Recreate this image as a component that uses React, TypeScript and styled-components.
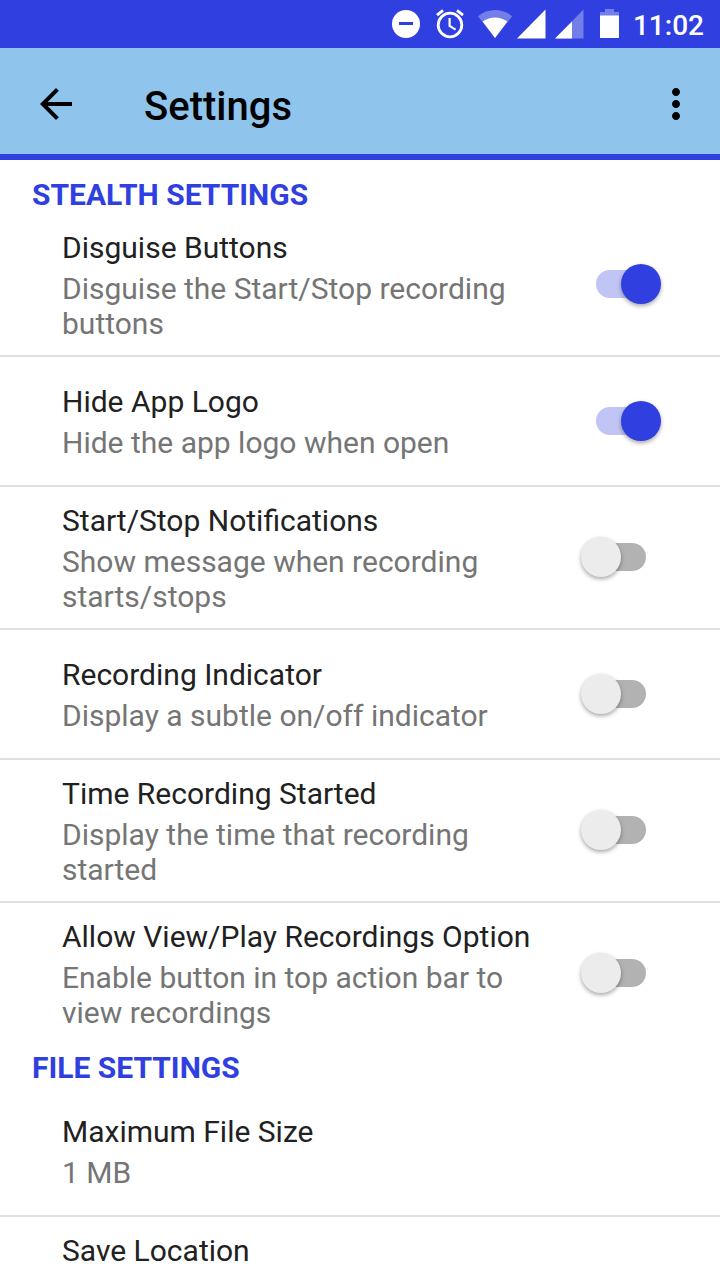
import { useState } from "react";
import styled, { createGlobalStyle } from "styled-components";

const GlobalStyle = createGlobalStyle`
  *, *::before, *::after { box-sizing: border-box; }
  html, body, #root { height: 100%; }
  body {
    margin: 0;
    background: #ffffff;
    color: #212121;
    font-family: Roboto, "Liberation Sans", sans-serif;
    font-size: 30px;
    line-height: 35px;
    overflow: hidden;
  }
`;

const Screen = styled.div`
  display: flex;
  flex-direction: column;
  height: 100%;
`;

const StatusBar = styled.div`
  display: flex;
  flex: none;
  align-items: center;
  justify-content: flex-end;
  height: 48px;
  padding-right: 16px;
  background: #303fdf;
  color: #ffffff;
`;

const StatusIcons = styled.svg`
  display: block;
  width: 242px;
  height: 48px;
`;

const Clock = styled.time`
  font-size: 28px;
  font-weight: 500;
  padding-top: 2px;
`;

const AppBar = styled.header`
  display: flex;
  flex: none;
  align-items: center;
  height: 112px;
  padding: 6px 20px 0 32px;
  background: #8fc5ec;
  border-bottom: 6px solid #303fdf;
`;

const IconButton = styled.button`
  display: flex;
  padding: 0;
  border: 0;
  background: none;
  color: #000000;
  cursor: pointer;

  svg {
    width: 48px;
    height: 48px;
    fill: currentColor;
  }
`;

const PageTitle = styled.h1`
  flex: 1;
  margin: 0;
  padding: 6px 0 0 64px;
  color: #000000;
  font-size: 40px;
  font-weight: 500;
  line-height: 48px;
`;

const SettingsList = styled.main`
  flex: 1;
  min-height: 0;
  padding-top: 11px;
  overflow: hidden;
`;

const SectionTitle = styled.h2`
  margin: 0;
  padding: 6px 32px 2px;
  color: #303fdf;
  font-size: 30px;
  font-weight: 700;
  line-height: 35px;
  text-transform: uppercase;
`;

const Row = styled.div`
  display: flex;
  align-items: center;
  min-height: 128px;
  padding: 14px 59px 14px 62px;

  & + & {
    min-height: 130px;
    border-top: 2px solid #e0e0e0;
  }
`;

const RowText = styled.div`
  flex: 1;
  margin-right: 32px;
  padding-top: 2px;
`;

const RowTitle = styled.label`
  display: block;
  margin-bottom: 6px;
`;

const Summary = styled.p`
  margin: 0;
  color: #757575;
`;

const Switch = styled.input`
  position: relative;
  flex: none;
  appearance: none;
  width: 80px;
  height: 40px;
  margin: 0 0 1px;
  cursor: pointer;

  &::before {
    content: "";
    position: absolute;
    inset: 6px 15px;
    border-radius: 14px;
    background: #b2b2b2;
  }

  &::after {
    content: "";
    position: absolute;
    top: 0;
    left: 0;
    width: 40px;
    height: 40px;
    border-radius: 50%;
    background: #ececec;
    box-shadow: 0 2px 4px rgba(0, 0, 0, 0.35);
  }

  &:checked::before { background: #c1c5f5; }
  &:checked::after { left: 40px; background: #303fdf; }
`;

type Setting = { id: string; title: string; summary: string; on?: boolean };

const stealthSettings: Setting[] = [
  { id: "disguise", title: "Disguise Buttons", summary: "Disguise the Start/Stop recording buttons", on: true },
  { id: "logo", title: "Hide App Logo", summary: "Hide the app logo when open", on: true },
  { id: "notify", title: "Start/Stop Notifications", summary: "Show message when recording starts/stops", on: false },
  { id: "indicator", title: "Recording Indicator", summary: "Display a subtle on/off indicator", on: false },
  { id: "time", title: "Time Recording Started", summary: "Display the time that recording started", on: false },
  { id: "view", title: "Allow View/Play Recordings Option", summary: "Enable button in top action bar to view recordings", on: false },
];

const fileSettings: Setting[] = [
  { id: "size", title: "Maximum File Size", summary: "1 MB" },
  { id: "location", title: "Save Location", summary: "Internal storage, 1.47 GB available on your device" },
];

function SettingRow({ id, title, summary, on }: Setting) {
  const [checked, setChecked] = useState(on ?? false);
  const hasSwitch = on !== undefined;
  return (
    <Row>
      <RowText>
        <RowTitle as={hasSwitch ? "label" : "div"} htmlFor={hasSwitch ? id : undefined}>{title}</RowTitle>
        <Summary>{summary}</Summary>
      </RowText>
      {hasSwitch && (
        <Switch id={id} type="checkbox" role="switch" checked={checked} onChange={(e) => setChecked(e.target.checked)} />
      )}
    </Row>
  );
}

export default function App() {
  return (
    <Screen>
      <GlobalStyle />
      <StatusBar>
        <StatusIcons viewBox="-3 0 242 48" fill="#ffffff" aria-hidden="true">
          <circle cx="12" cy="24" r="14" />
          <path d="M5 22h14v3H5z" fill="#303fdf" />
          <g fill="none" stroke="#ffffff" strokeWidth="2.8">
            <circle cx="56" cy="25" r="11.8" />
            <path d="M55.6 18v8l6 3.6" strokeWidth="2.2" />
            <path d="M43 15.2l6-4.8M69 15.2l-6-4.8" />
          </g>
          <path d="M84 16.2C94 8 108 8 118.2 16.2L101 38z" opacity="0.33" />
          <path d="M88.6 21.5Q101 13.5 113.4 21.5L101 38z" />
          <path d="M123 38.5L151.500 9.500V38.500z" />
          <path d="M161 38.500L189.500 9.500V38.500z" opacity="0.33" />
          <path d="M161 38.500L178 21.500V38.500z" />
          <path d="M206 12h5V9h9v3h5v4h-19z" opacity="0.33" />
          <path d="M206 15.500h19V38h-19z" />
        </StatusIcons>
        <Clock>11:02</Clock>
      </StatusBar>
      <AppBar>
        <IconButton type="button" aria-label="Back">
          <svg viewBox="0 0 24 24"><path d="M20 11H7.830l5.590-5.590L12 4l-8 8 8 8 1.410-1.410L7.830 13H20v-2z" /></svg>
        </IconButton>
        <PageTitle>Settings</PageTitle>
        <IconButton type="button" aria-label="More options">
          <svg viewBox="0 0 24 24"><path d="M12 8c1.100 0 2-.9 2-2s-.9-2-2-2-2 .9-2 2 .9 2 2 2zm0 2c-1.100 0-2 .9-2 2s.9 2 2 2 2-.9 2-2-.9-2-2-2zm0 6c-1.100 0-2 .9-2 2s.9 2 2 2 2-.9 2-2-.9-2-2-2z" /></svg>
        </IconButton>
      </AppBar>
      <SettingsList>
        <SectionTitle>Stealth Settings</SectionTitle>
        {stealthSettings.map((s) => <SettingRow key={s.id} {...s} />)}
        <SectionTitle>File Settings</SectionTitle>
        {fileSettings.map((s) => <SettingRow key={s.id} {...s} />)}
      </SettingsList>
    </Screen>
  );
}
